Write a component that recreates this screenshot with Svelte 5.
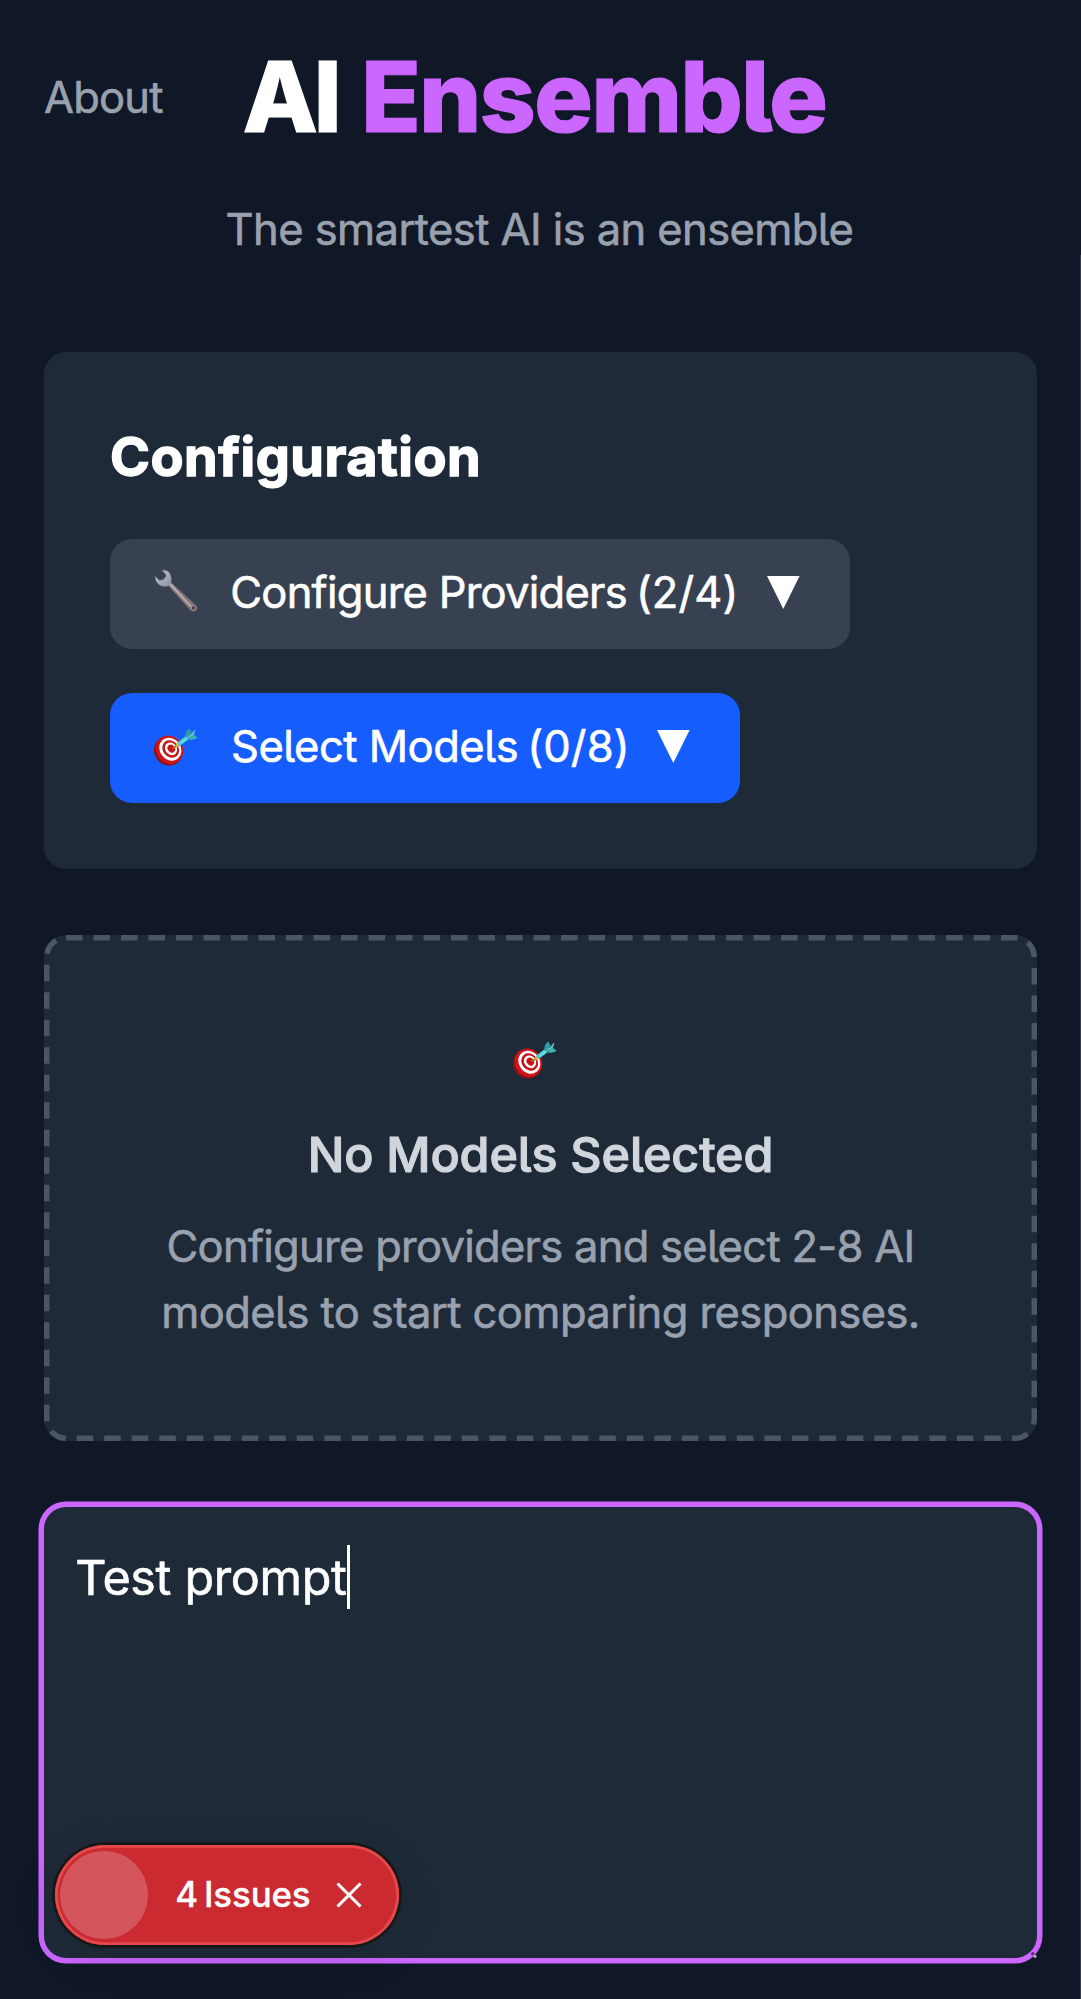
<script>
  const hint = ['Configure providers and select 2-8 AI', 'models to start comparing responses.'];
</script>

{#snippet target()}
  <svg class="target" viewBox="0 0 44 40" aria-hidden="true">
    <ellipse cx="14.3" cy="23" rx="14" ry="15" transform="rotate(-35 14.3 23)" fill="#8e1013" />
    <ellipse cx="15.4" cy="21.7" rx="13.3" ry="14.7" transform="rotate(-38 15.4 21.7)" fill="#cf1418" />
    <ellipse cx="16.3" cy="21.2" rx="10.4" ry="12" transform="rotate(-38 16.3 21.2)" fill="#fff" />
    <ellipse cx="16.7" cy="21" rx="7.9" ry="9.3" transform="rotate(-38 16.7 21)" fill="#c51418" />
    <ellipse cx="17" cy="20.8" rx="5.7" ry="6.8" transform="rotate(-38 17 20.8)" fill="#fff" />
    <ellipse cx="17.3" cy="20.6" rx="3.5" ry="4.2" transform="rotate(-38 17.3 20.6)" fill="#c51418" />
    <path d="M18.5 20.5 24 17" stroke="#a77415" stroke-width="1.5" />
    <path d="m21.4 17.4 1.6-2.8 3 3.1-3 1.5Z" fill="#e3b51b" />
    <path d="M23 14.8 31.5 8.3 34.5 11.5 26 17.8Q23.6 17.8 23 14.8Z" fill="#4fd0d3" />
    <path d="M31.2 8.5Q31.3 3.3 35.2.6L37.7 4.7 34.4 9.4Z" fill="#309ca5" />
    <path d="M34.3 9.7 40.7 1.7 41.4 2.3 39.6 7.8Z" fill="#66bec2" />
    <path d="M33.3 11.3 36.5 8.2 40 6.8 43.7 10.1Q39.5 12.5 35.2 11.6Z" fill="#3ab1b7" />
    <path d="m27 14.8 10.2-8" stroke="#8df0eb" stroke-width=".8" />
  </svg>
{/snippet}

{#snippet arrow()}
  <svg class="arrow" viewBox="0 0 33 33" aria-hidden="true"><path d="M0 0H32.6L16.3 33Z" fill="#fff" /></svg>
{/snippet}

<div class="page">
  <header>
    <a class="about">About</a>
    <h1><span class="ai">AI</span><span class="ensemble">Ensemble</span></h1>
  </header>
  <p class="tagline">The smartest AI is an ensemble</p>

  <main>
    <section class="config">
      <h2>Configuration</h2>
      <button class="providers">
        <svg class="wrench" viewBox="0 0 44 44" aria-hidden="true">
          <defs>
            <linearGradient id="steel" x1="4" y1="4" x2="40" y2="40" gradientUnits="userSpaceOnUse">
              <stop offset="0" stop-color="#b4c3cf" />
              <stop offset=".3" stop-color="#929ba7" />
              <stop offset=".5" stop-color="#8d8388" />
              <stop offset="1" stop-color="#897273" />
            </linearGradient>
          </defs>
          <path d="M7.6 1.2Q15 .2 17 6.5 18 10.5 17.2 13.6L42.4 36.8Q44.2 39.4 42.3 41.4 39.6 43.8 36.4 41.4L14.8 17.1Q8.2 18.9 4.2 15.2.4 11.5 1 6.9L5.2 11Q10.3 11.5 11.8 6.7L11.2 4.7Z" fill="url(#steel)" stroke="#5d555d" stroke-width=".7" />
          <path d="M16.6 15.5 37.4 38" stroke="#c0b6ba" stroke-width="1.3" />
          <circle cx="39.3" cy="38.9" r="2" fill="#3a3b45" stroke="#aaa0a2" stroke-width=".7" />
        </svg>
        <span class="label">Configure Providers <span class="tally">(2/4)</span></span>
        {@render arrow()}
      </button>
      <button class="models">
        {@render target()}
        <span class="label">Select Models <span class="tally">(0/8)</span></span>
        {@render arrow()}
      </button>
    </section>

    <section class="empty">
      <svg class="dashes" viewBox="0 0 993 506" aria-hidden="true">
        <rect x="2.75" y="2.75" width="987.5" height="500.5" rx="19.25" fill="none" stroke="#4a5565" stroke-width="5.5" stroke-dasharray="16.5 11.004" />
      </svg>
      {@render target()}
      <h3>No Models Selected</h3>
      <p>{#each hint as line}<span class="line">{line}</span>{/each}</p>
    </section>

    <section class="prompt">
      <span class="typed">Test prompt</span><span class="caret"></span>
      <svg class="grip" viewBox="0 0 6 6" aria-hidden="true">
        <circle cx="1.7" cy="1.7" r="1.7" fill="#5b3076" />
        <circle cx="4" cy="4.3" r="1.6" fill="#b3a9bd" />
      </svg>
    </section>
  </main>

  <div class="issues">
    <span class="knob"></span>
    <span class="count">4 Issues</span>
    <svg class="close" viewBox="0 0 26 26" aria-hidden="true"><path d="M1.5 1.5 24.5 24.5M24.5 1.5 1.5 24.5" stroke="#fff" stroke-width="3.1" /></svg>
  </div>
  <div class="scroll-edge"></div>
</div>

<style>
  :global(body) { background: #101726; }
  .page {
    position: relative;
    box-sizing: border-box;
    height: 1999px;
    overflow: hidden;
    padding: 41.5px 44px 0;
    background: #101726;
    color: #fff;
    font-family: Inter, "Liberation Sans", sans-serif;
    font-feature-settings: "cv05";
    font-size: 43.5px;
    line-height: 66px;
    -webkit-text-stroke: 0.6px currentColor;
  }
  h1, h2, h3, p { margin: 0; }
  header { display: flex; align-items: center; gap: 80px; height: 110px; }
  .about { color: #99a1af; letter-spacing: -0.8px; padding-top: 1px; white-space: nowrap; }
  h1 { display: flex; gap: 23.6px; font-size: 97.6px; font-weight: 800; line-height: 110px; -webkit-text-stroke-width: 1.2px; }
  .ai { letter-spacing: -4px; }
  .ensemble { color: #cb66ff; letter-spacing: -1.46px; -webkit-text-stroke-color: #cb66ff; }
  .tagline {
    margin-top: 44.5px;
    padding-right: 2px;
    text-align: center;
    color: #99a1af;
    letter-spacing: -0.586px;
  }
  .about, .tagline, .empty p { -webkit-text-stroke-color: #99a1af; }
  main { display: flex; flex-direction: column; gap: 66px; margin-top: 90px; }

  .config {
    box-sizing: border-box;
    height: 517px;
    padding: 66px;
    border-radius: 22px;
    background: #1f2a39;
    display: flex;
    flex-direction: column;
    align-items: flex-start;
  }
  h2 { font-size: 54px; font-weight: 700; line-height: 77px; letter-spacing: 0.5px; -webkit-text-stroke-width: 1.4px; }
  button {
    display: flex;
    align-items: center;
    box-sizing: border-box;
    height: 110px;
    margin-top: 44px;
    padding: 0 50.4px 3px 44px;
    border: 0;
    border-radius: 22px;
    color: #fff;
    font: inherit;
    font-feature-settings: inherit;
    white-space: nowrap;
  }
  .providers { width: 740px; background: #374151; letter-spacing: -0.75px; }
  .models { width: 630px; background: #155dff; letter-spacing: -0.5px; }
  .label { padding-bottom: 2px; }
  .tally { margin-left: -2.5px; letter-spacing: 0.1px; }
  .wrench { flex: none; width: 44px; height: 44px; margin: 0 32.3px 4px 0; }
  .target { flex: none; width: 44px; height: 40px; }
  .models .target { margin: 3px 33px 0 0; }
  .arrow { flex: none; width: 33px; height: 33px; margin-left: auto; }

  .empty {
    position: relative;
    box-sizing: border-box;
    height: 506px;
    padding-top: 106px;
    border-radius: 22px;
    background: #1f2a39;
    display: flex;
    flex-direction: column;
    align-items: center;
  }
  .dashes { position: absolute; inset: 0; width: 100%; height: 100%; }
  .empty .target { margin: 0 11px 46px 0; }
  h3 {
    margin-bottom: 31px;
    color: #d1d5dc;
    font-size: 48.5px;
    font-weight: 500;
    line-height: 55px;
    letter-spacing: -0.12px;
    -webkit-text-stroke: 1.1px #d1d5dc;
  }
  .empty p { color: #99a1af; text-align: center; }
  .line { display: block; letter-spacing: -0.72px; }
  .line + .line { letter-spacing: -0.59px; }

  .prompt {
    position: relative;
    display: flex;
    align-items: flex-start;
    box-sizing: border-box;
    height: 451px;
    padding: 32px 31.3px;
    border-radius: 22px;
    background: #1f2a39;
    box-shadow: 0 0 0 5.5px #cb66ff;
    font-size: 48.5px;
    line-height: 77px;
    letter-spacing: -0.36px;
  }
  .caret { width: 3px; height: 64px; margin-top: 6px; background: #fff; }
  .grip { position: absolute; right: 0; bottom: 0; width: 6px; height: 6px; }

  .issues {
    position: absolute;
    left: 55px;
    top: 1845px;
    display: flex;
    align-items: center;
    box-sizing: border-box;
    width: 344px;
    height: 100px;
    padding: 0 0 1px 5.3px;
    border-radius: 50px;
    background: #ca2a30;
    box-shadow: inset 0 0 0 2.75px #e5484d, 0 0 0 2.75px #171717, 0 11px 44px rgba(0, 0, 0, 0.14);
    font-size: 35px;
    font-weight: 500;
    letter-spacing: -0.2px;
    word-spacing: -3.2px;
    -webkit-text-stroke-width: 0.3px;
  }
  .knob { width: 88px; height: 88px; border-radius: 50%; background: #d4555b; }
  .count { width: 136px; margin-left: 27px; padding-bottom: 1px; white-space: nowrap; }
  .close { width: 26px; height: 26px; margin-left: 25.2px; }
  .scroll-edge { position: absolute; right: 0; top: 255px; bottom: 0; width: 1px; background: #373d47; }
</style>
